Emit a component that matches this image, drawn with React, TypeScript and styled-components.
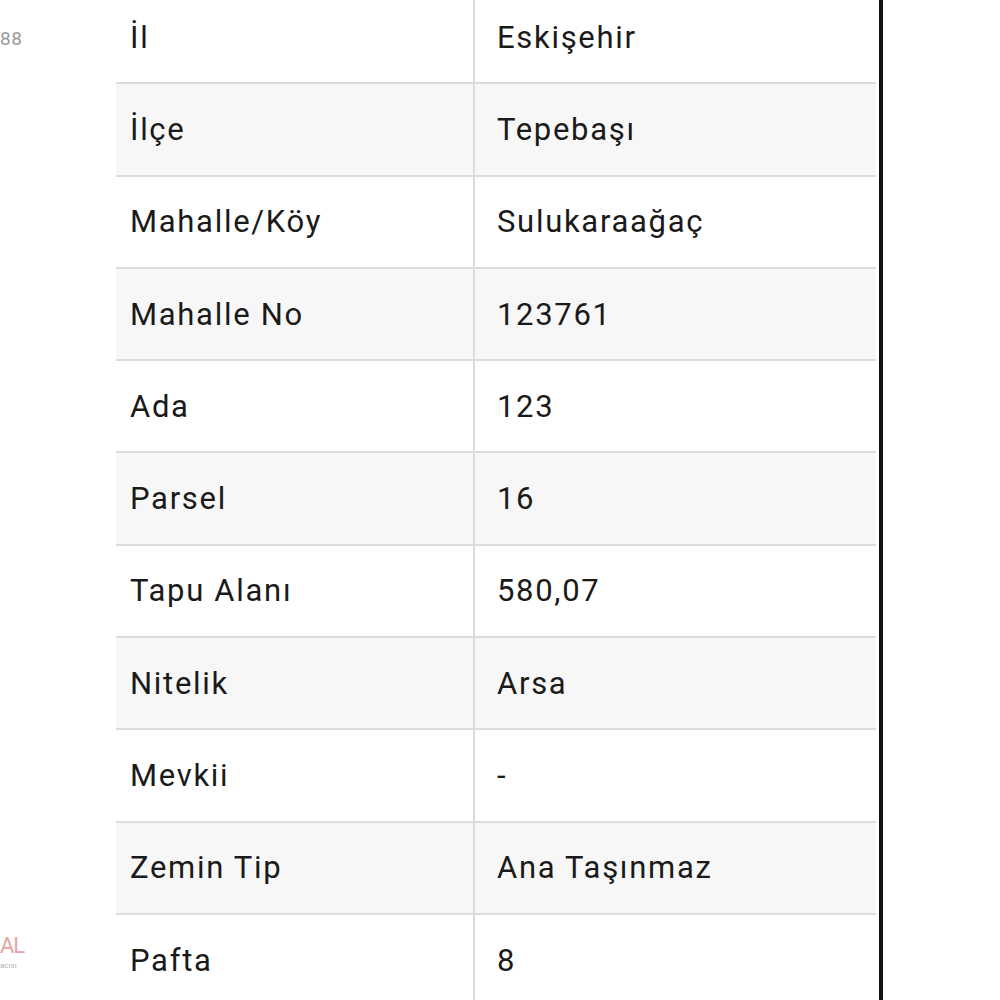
import React from "react";
import styled, { createGlobalStyle } from "styled-components";

const Global = createGlobalStyle`
  html, body { margin: 0; padding: 0; background: #ffffff; }
  body { width: 1000px; height: 1000px; overflow: hidden; font-family: Roboto, "Noto Sans", Arial, sans-serif; }
`;

const Page = styled.div`
  display: flex;
  width: 1000px;
  height: 1000px;
  overflow: hidden;
  background: #fff;
`;

const Gutter = styled.div`
  width: 116px;
  flex: none;
  display: flex;
  flex-direction: column;
  justify-content: space-between;
  padding: 29px 0 30px 0;
  box-sizing: border-box;
`;

const PageNo = styled.div`
  font-size: 19px;
  line-height: 20px;
  color: #9a9a9a;
  letter-spacing: 0.5px;
`;

const Brand = styled.div`
  display: flex;
  flex-direction: column;
  line-height: 1;
`;

const BrandName = styled.span`
  font-size: 22px;
  color: #eaa3a3;
  letter-spacing: -1px;
`;

const BrandSub = styled.span`
  font-size: 8px;
  color: #b0b0b0;
  margin-top: 5px;
`;

const Table = styled.div`
  width: 760px;
  flex: none;
  margin-top: -8px;
  display: flex;
  flex-direction: column;
`;

const Row = styled.div<{ $shaded: boolean }>`
  display: grid;
  grid-template-columns: 357px 2px 1fr;
  height: 90.3px;
  flex: none;
  border-bottom: 2px solid #dcdcdc;
  background: ${(p) => (p.$shaded ? "#f7f7f7" : "#ffffff")};
`;

const Cell = styled.div<{ $pad: number }>`
  display: flex;
  align-items: center;
  padding-left: ${(p) => p.$pad}px;
  font-size: 31px;
  letter-spacing: 1.7px;
  color: #1a1a1a;
`;

const Divider = styled.div`
  background: #dcdcdc;
`;

const Rule = styled.div`
  width: 4px;
  flex: none;
  margin-left: 3px;
  background: #111;
`;

const rows: [string, string][] = [
  ["İl", "Eskişehir"],
  ["İlçe", "Tepebaşı"],
  ["Mahalle/Köy", "Sulukaraağaç"],
  ["Mahalle No", "123761"],
  ["Ada", "123"],
  ["Parsel", "16"],
  ["Tapu Alanı", "580,07"],
  ["Nitelik", "Arsa"],
  ["Mevkii", "-"],
  ["Zemin Tip", "Ana Taşınmaz"],
  ["Pafta", "8"],
];

export default function App() {
  return (
    <Page>
      <Global />
      <Gutter>
        <PageNo>88</PageNo>
        <Brand>
          <BrandName>AL</BrandName>
          <BrandSub>acısı</BrandSub>
        </Brand>
      </Gutter>
      <Table>
        {rows.map(([k, v], i) => (
          <Row key={k} $shaded={i % 2 === 1}>
            <Cell $pad={14}>{k}</Cell>
            <Divider />
            <Cell $pad={22}>{v}</Cell>
          </Row>
        ))}
      </Table>
      <Rule />
    </Page>
  );
}
